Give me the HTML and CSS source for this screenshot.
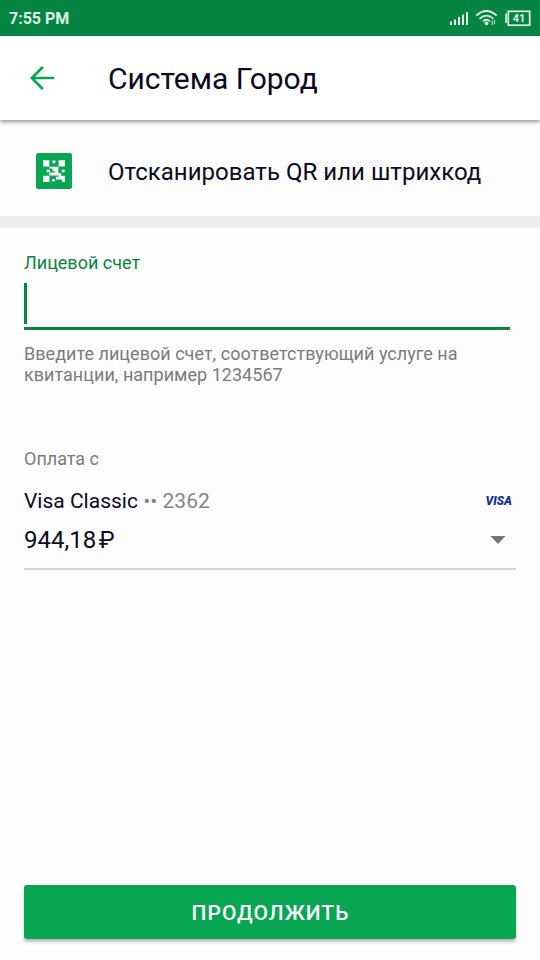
FILE: index.html
```html
<!DOCTYPE html>
<html lang="ru">
<head>
<meta charset="utf-8">
<title>Система Город</title>
<link rel="stylesheet" href="styles.css">
</head>
<body>
<div class="status">
  <span class="time">7:55 PM</span>
  <svg class="status-icons" width="84" height="20" viewBox="0 0 84 20">
    <g fill="#dff2e6">
      <path d="M2 13.500h2V17H2zM6 11.500h2V17H6zM10 9h2v8h-2zM14 6.500h2V17h-2zM18 4h2v13h-2z"/>
      <circle cx="38.500" cy="15.300" r="1.900"/>
      <path d="M43.500 13.500l1.300-1.500v5h-1.300zM45.800 12h1.300v3.500L45.800 17z" opacity=".75"/>
      <path d="M57.300 5.500h1.700v9.500h-1.700z"/>
    </g>
    <g fill="none" stroke="#dff2e6" stroke-width="1.700">
      <path d="M28.300 7.500Q38.500-1.500 48.700 7.500M31.500 10.800Q38.500 4.500 45.500 10.800M34.800 13.500Q38.500 10 42 13.500"/>
      <rect x="60.300" y="3.300" width="21.400" height="13.900"/>
    </g>
    <text class="battery" x="71" y="14.300">41</text>
  </svg>
</div>
<header class="bar">
  <svg class="back" width="24" height="24" viewBox="0 0 24 24"><path d="M24 12H1.500M12.800 1 1.800 12l11 11" fill="none" stroke="#08a652" stroke-width="2.700"/></svg>
  <h1 class="title">Система Город</h1>
</header>
<div class="scan">
  <svg class="qr" width="36" height="36" viewBox="0 0 36 36">
    <rect width="36" height="36" rx="2.500" fill="#08a652"/>
    <path transform="translate(7.200 7.200) scale(3.100)" fill="#fff" d="M0 0h2v2H0zM3 .100h.900v.900H3zM5 0h2v2H5zM2 2.100h2.900v2.100h.900V5H7v2h-.900v-.800H4.100v-.900H5v-.400H2v-.900h1.900v-.400H3v-.900H2zM1.100 3.100h1.100v.800H1.100zM6 3.100h.900v.800H6zM0 5h2v2H0zM2.900 6.100h.900v.800h-.900z"/>
  </svg>
  <span class="scan-text">Отсканировать QR или штрихкод</span>
</div>
<main class="form">
  <div class="label">Лицевой счет</div>
  <div class="field"><div class="caret"></div></div>
  <div class="hint">Введите лицевой счет, соответствующий услуге на<br>квитанции, например 1234567</div>
  <div class="from">Оплата с</div>
  <div class="account">
    <div class="row card"><span class="card-name">Visa Classic <span class="number"><span class="dots">••</span> 2362</span></span><span class="visa">VISA</span></div>
    <div class="row amount"><span>944,18<span class="rub">₽</span></span><svg class="arrow" width="16" height="8" viewBox="0 0 16 8"><path d="M.500 0h15L8 8z" fill="#757575"/></svg></div>
  </div>
  <button class="submit">ПРОДОЛЖИТЬ</button>
</main>
</body>
</html>
```
FILE: styles.css
```css
* { box-sizing: border-box; }
body {
  margin: 0;
  height: 960px;
  display: flex;
  flex-direction: column;
  overflow: hidden;
  background: #fdfdfd;
  color: #0b0a22;
  font-family: Roboto, "Liberation Sans", sans-serif;
}
.status {
  position: relative;
  z-index: 1;
  height: 36px;
  display: flex;
  align-items: center;
  justify-content: space-between;
  padding: 0 8px 0 9px;
  background: #058541;
  color: #dff2e6;
}
.time { margin-top: 2px; font-size: 16px; font-weight: 700; line-height: 20px; }
.battery {
  fill: #dff2e6;
  font: 700 11px Roboto, sans-serif;
  text-anchor: middle;
}
.bar {
  height: 84px;
  display: flex;
  align-items: center;
  padding-left: 30px;
  background: #fff;
  box-shadow: 0 2px 4px rgba(0, 0, 0, .4);
}
.title {
  margin: 2px 0 0 54px;
  font-size: 30px;
  font-weight: 400;
  line-height: 36px;
}
.scan {
  height: 108px;
  display: flex;
  align-items: center;
  padding: 6px 0 0 36px;
  border-bottom: 12px solid #edeeef;
}
.scan-text { margin: 2px 0 0 36px; font-size: 24px; line-height: 30px; letter-spacing: .02px; }
.form {
  flex: 1;
  display: flex;
  flex-direction: column;
  padding: 24px 24px 21px;
}
.label { color: #058541; font-size: 18px; line-height: 22px; }
.field {
  width: 486px;
  height: 56px;
  padding-top: 9px;
  border-bottom: 3px solid #058541;
}
.caret { width: 3px; height: 41px; background: #058541; }
.hint {
  margin-top: 13px;
  color: #7b7b7b;
  font-size: 18px;
  line-height: 21px;
  letter-spacing: .03px;
}
.from { margin-top: 63px; color: #7b7b7b; font-size: 18px; line-height: 21px; }
.account { height: 101px; border-bottom: 2px solid #d6d6d6; }
.row { display: flex; align-items: center; justify-content: space-between; }
.card { height: 40px; margin-top: 12px; padding-right: 4px; font-size: 21px; }
.number { color: #858585; }
.dots { font-size: 21px; }
.visa { color: #1a2f92; font-size: 12px; font-style: italic; font-weight: 900; }
.amount { height: 38px; padding-right: 10px; font-size: 24px; }
.rub { margin-left: 2.5px; }
.submit {
  height: 54px;
  margin-top: auto;
  padding: 2px 0 0 1px;
  border: 0;
  border-radius: 3px;
  background: #08a652;
  box-shadow: 0 3px 3px rgba(0, 0, 0, .25);
  color: #fff;
  font: 500 21px/52px Roboto, sans-serif;
  letter-spacing: 1px;
}
```
